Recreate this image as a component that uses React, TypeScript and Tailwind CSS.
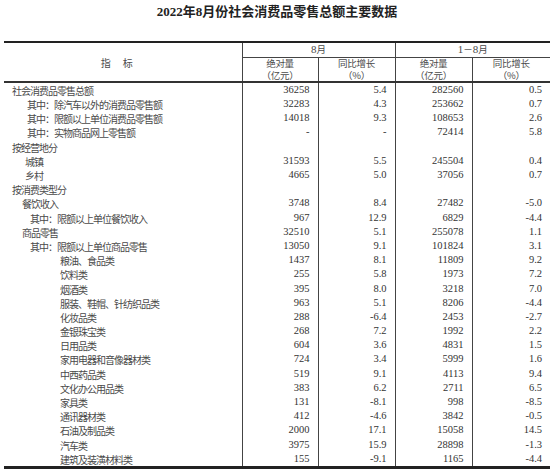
import React from 'react';

type Row = {
  label: string;
  indent: number;
  v?: [string, string, string, string];
};

const rows: Row[] = [
  { label: '社会消费品零售总额', indent: 8, v: ['36258', '5.4', '282560', '0.5'] },
  { label: '其中：除汽车以外的消费品零售额', indent: 23, v: ['32283', '4.3', '253662', '0.7'] },
  { label: '其中：限额以上单位消费品零售额', indent: 23, v: ['14018', '9.3', '108653', '2.6'] },
  { label: '其中：实物商品网上零售额', indent: 23, v: ['-', '-', '72414', '5.8'] },
  { label: '按经营地分', indent: 8 },
  { label: '城镇', indent: 21, v: ['31593', '5.5', '245504', '0.4'] },
  { label: '乡村', indent: 21, v: ['4665', '5.0', '37056', '0.7'] },
  { label: '按消费类型分', indent: 8 },
  { label: '餐饮收入', indent: 18, v: ['3748', '8.4', '27482', '-5.0'] },
  { label: '其中：限额以上单位餐饮收入', indent: 26, v: ['967', '12.9', '6829', '-4.4'] },
  { label: '商品零售', indent: 18, v: ['32510', '5.1', '255078', '1.1'] },
  { label: '其中：限额以上单位商品零售', indent: 26, v: ['13050', '9.1', '101824', '3.1'] },
  { label: '粮油、食品类', indent: 56, v: ['1437', '8.1', '11809', '9.2'] },
  { label: '饮料类', indent: 56, v: ['255', '5.8', '1973', '7.2'] },
  { label: '烟酒类', indent: 56, v: ['395', '8.0', '3218', '7.0'] },
  { label: '服装、鞋帽、针纺织品类', indent: 56, v: ['963', '5.1', '8206', '-4.4'] },
  { label: '化妆品类', indent: 56, v: ['288', '-6.4', '2453', '-2.7'] },
  { label: '金银珠宝类', indent: 56, v: ['268', '7.2', '1992', '2.2'] },
  { label: '日用品类', indent: 56, v: ['604', '3.6', '4831', '1.5'] },
  { label: '家用电器和音像器材类', indent: 56, v: ['724', '3.4', '5999', '1.6'] },
  { label: '中西药品类', indent: 56, v: ['519', '9.1', '4113', '9.4'] },
  { label: '文化办公用品类', indent: 56, v: ['383', '6.2', '2711', '6.5'] },
  { label: '家具类', indent: 56, v: ['131', '-8.1', '998', '-8.5'] },
  { label: '通讯器材类', indent: 56, v: ['412', '-4.6', '3842', '-0.5'] },
  { label: '石油及制品类', indent: 56, v: ['2000', '17.1', '15058', '14.5'] },
  { label: '汽车类', indent: 56, v: ['3975', '15.9', '28898', '-1.3'] },
  { label: '建筑及装潢材料类', indent: 56, v: ['155', '-9.1', '1165', '-4.4'] },
];

const cjk = { fontFamily: '"Noto Sans CJK SC", sans-serif' };
const num = { fontFamily: '"Liberation Serif", "Noto Sans CJK SC", serif' };

const App = () => {
  return (
    <div className="w-[554px] h-[472px] bg-white overflow-hidden">
      {/* Title */}
      <h1
        className="pt-[3px] h-[41px] text-center text-[13px] font-bold text-[#222] leading-[18px]"
        style={{ fontFamily: '"Liberation Serif", "Noto Sans CJK SC", serif' }}
      >
        2022年8月份社会消费品零售总额主要数据
      </h1>

      {/* Table */}
      <table className="ml-[4px] w-[546px] table-fixed border-collapse text-[#333]">
        <colgroup>
          <col className="w-[238px]" />
          <col className="w-[76px]" />
          <col className="w-[77px]" />
          <col className="w-[77px]" />
          <col className="w-[78px]" />
        </colgroup>
        <thead style={cjk} className="text-[9.5px] leading-[11px] text-[#4a4a4a]">
          <tr className="h-[15px] border-t-2 border-[#222]">
            <th rowSpan={2} className="font-normal text-[10px] text-center border-b-2 border-[#333] tracking-[12px]">
              指标
            </th>
            <th colSpan={2} className="font-normal text-center border-l border-b border-[#444]">
              <span style={num} className="text-[11px]">8</span>月
            </th>
            <th colSpan={2} className="font-normal text-center border-l border-b border-[#444]">
              <span style={num} className="text-[11px]">1</span>－<span style={num} className="text-[11px]">8</span>月
            </th>
          </tr>
          <tr className="h-[25px] border-b-2 border-[#333]">
            {['绝对量', '同比增长', '绝对量', '同比增长'].map((t, i) => (
              <th key={i} className="font-normal text-center border-l border-[#444] align-middle p-0">
                <div className="flex flex-col items-center gap-[1px] tracking-[-0.3px]">
                  <span>{t}</span>
                  <span>{i % 2 === 0 ? '（亿元）' : '（%）'}</span>
                </div>
              </th>
            ))}
          </tr>
        </thead>
        <tbody className="border-b-[3px] border-[#222]">
          {rows.map((r, i) => (
            <tr key={i} className="h-[14.2px]">
              <td
                style={{ ...cjk, paddingLeft: r.indent }}
                className="text-[10px] tracking-[-1px] leading-[13px] whitespace-nowrap p-0 pt-[1px] text-[#4a4a4a]"
              >
                {r.label}
              </td>
              {[0, 1, 2, 3].map((c) => (
                <td
                  key={c}
                  style={num}
                  className="border-l border-[#444] text-right pr-[8px] text-[10.5px] leading-[14px] p-0"
                >
                  {r.v ? r.v[c] : ''}
                </td>
              ))}
            </tr>
          ))}
        </tbody>
      </table>
    </div>
  );
};

export default App;
